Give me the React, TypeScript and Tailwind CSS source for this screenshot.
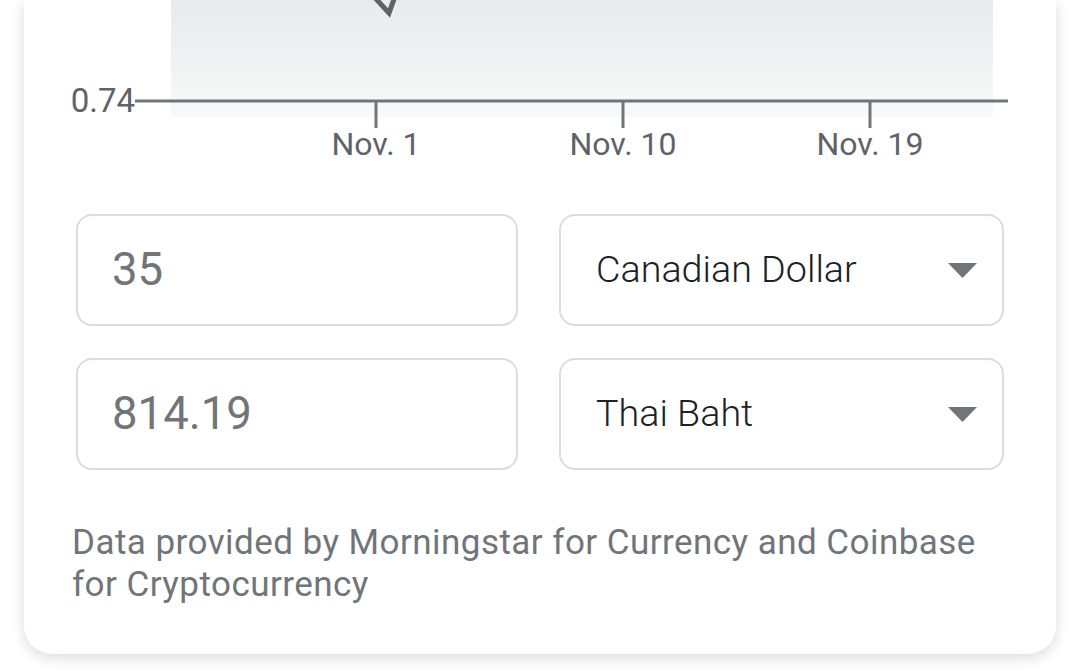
import React from 'react'

const ticks = [
    { x: 304, label: 'Nov. 1' },
    { x: 551, label: 'Nov. 10' },
    { x: 798, label: 'Nov. 19' },
]

function Chart() {
    return (
        <svg width="936" height="170" viewBox="0 0 936 170" className="block overflow-visible">
            <defs>
                <linearGradient id="area" x1="0" y1="0" x2="0" y2="1">
                    <stop offset="0" stopColor="#e8eaeb" />
                    <stop offset="1" stopColor="#f8f9f9" />
                </linearGradient>
            </defs>
            <rect x="99" y="0" width="822" height="117" fill="url(#area)" />
            <polyline points="294,-12 317,13 326,-12" fill="none" stroke="#5f6368" strokeWidth="5" strokeLinejoin="miter" />
            <line x1="63" y1="101" x2="936" y2="101" stroke="#70757a" strokeWidth="3" />
            <text x="63" y="112" textAnchor="end" fontSize="33" fill="#5f6368" fontFamily="Roboto, 'Noto Sans', sans-serif">0.74</text>
            {ticks.map(t => (
                <g key={t.label}>
                    <line x1={t.x} y1="101" x2={t.x} y2="128" stroke="#70757a" strokeWidth="3" />
                    <text x={t.x} y="155" textAnchor="middle" fontSize="32" fill="#5f6368" fontFamily="Roboto, 'Noto Sans', sans-serif">{t.label}</text>
                </g>
            ))}
        </svg>
    )
}

function Caret() {
    return (
        <svg width="29" height="15" viewBox="0 0 29 15" className="shrink-0">
            <path d="M0 0 L29 0 L14.5 15 Z" fill="#70757a" />
        </svg>
    )
}

export default function App() {
    const boxClass = "h-[112px] flex items-center border-2 border-[#dadce0] rounded-[16px] bg-white"

    return (
        <div className="w-full h-[671px] overflow-hidden bg-white px-6 font-['Roboto','Noto_Sans',sans-serif]">
            <div className="bg-white rounded-b-[28px] shadow-[0_4px_14px_rgba(0,0,0,0.14)] px-12 pb-[48px]">
                <Chart />

                <div className="grid grid-cols-[442px_445px] gap-x-[41px] gap-y-8 mx-1 mt-[44px]">
                    <div className={`${boxClass} pl-[34px]`}>
                        <span className="text-[45.5px] leading-none text-[#70757a]">35</span>
                    </div>
                    <div className={`${boxClass} pl-[35px] pr-[25px] justify-between`}>
                        <span className="text-[37.7px] leading-none font-light text-[#202124]">Canadian Dollar</span>
                        <Caret />
                    </div>
                    <div className={`${boxClass} pl-[34px]`}>
                        <span className="text-[45.5px] leading-none text-[#70757a]">814.19</span>
                    </div>
                    <div className={`${boxClass} pl-[35px] pr-[25px] justify-between`}>
                        <span className="text-[37.7px] leading-none font-light text-[#202124]">Thai Baht</span>
                        <Caret />
                    </div>
                </div>

                <p className="mt-[52px] text-[35px] tracking-[0.45px] leading-[42px] text-[#70757a]">
                    Data provided by Morningstar for Currency and Coinbase for Cryptocurrency
                </p>
            </div>
        </div>
    )
}
